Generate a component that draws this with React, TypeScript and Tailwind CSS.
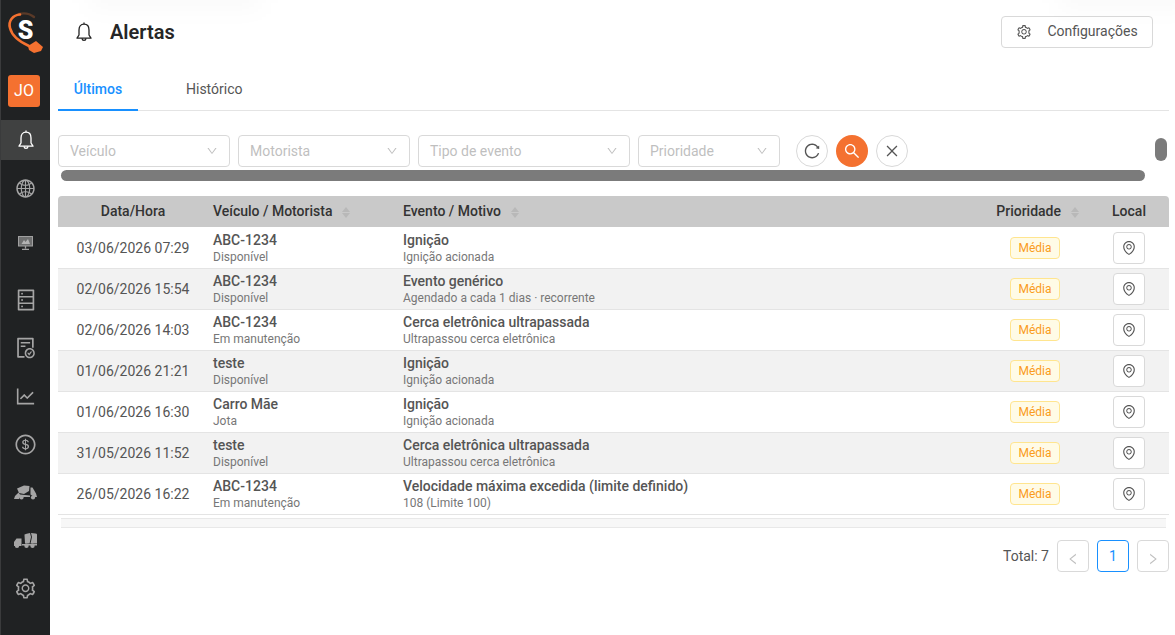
import {
  AiOutlineClose,
  AiOutlineDatabase,
  AiOutlineDollarCircle,
  AiOutlineDown,
  AiOutlineEnvironment,
  AiOutlineFileDone,
  AiOutlineGlobal,
  AiOutlineLeft,
  AiOutlineLineChart,
  AiOutlineReload,
  AiOutlineRight,
  AiOutlineSearch,
  AiOutlineSetting,
} from "react-icons/ai";

const rows = [
  { date: "03/06/2026 07:29", vehicle: "ABC-1234", driver: "Disponível", event: "Ignição", reason: "Ignição acionada" },
  { date: "02/06/2026 15:54", vehicle: "ABC-1234", driver: "Disponível", event: "Evento genérico", reason: "Agendado a cada 1 dias · recorrente" },
  { date: "02/06/2026 14:03", vehicle: "ABC-1234", driver: "Em manutenção", event: "Cerca eletrônica ultrapassada", reason: "Ultrapassou cerca eletrônica" },
  { date: "01/06/2026 21:21", vehicle: "teste", driver: "Disponível", event: "Ignição", reason: "Ignição acionada" },
  { date: "01/06/2026 16:30", vehicle: "Carro Mãe", driver: "Jota", event: "Ignição", reason: "Ignição acionada" },
  { date: "31/05/2026 11:52", vehicle: "teste", driver: "Disponível", event: "Cerca eletrônica ultrapassada", reason: "Ultrapassou cerca eletrônica" },
  { date: "26/05/2026 16:22", vehicle: "ABC-1234", driver: "Em manutenção", event: "Velocidade máxima excedida (limite definido)", reason: "108 (Limite 100)" },
];

const gridCols = "grid grid-cols-[150px_195px_1fr_100px_84px] items-center";

function Logo() {
  return (
    <svg width="49" height="60" viewBox="0 0 49 60" className="block">
      <path d="M33 17 C28 13 22 13 18 14" fill="none" stroke="#5a3a28" strokeWidth="2.4" strokeLinecap="round" />
      <path d="M19 14.5 C12 15 7 21 9 28 C11 36 19 42 28 46" fill="none" stroke="#f47130" strokeWidth="2.6" strokeLinecap="round" />
      <path d="M27 46 L35 41 L42 47 L40 51 L33 53 L28 50 Z" fill="#f47130" />
      <text x="24.5" y="39" textAnchor="middle" fontFamily="Roboto, sans-serif" fontWeight="900" fontSize="25" fill="#ffffff">S</text>
    </svg>
  );
}

function BellIcon({ className }: { className?: string }) {
  return (
    <svg width="16" height="20" viewBox="0 0 16 20" fill="none" stroke="currentColor" strokeWidth="1.3" className={className}>
      <path d="M8 0.5 V2.2 M8 2.2 C4.6 2.2 3 5 3 8 V13 L1 16.2 H15 L13 13 V8 C13 5 11.4 2.2 8 2.2 Z" strokeLinejoin="round" />
      <path d="M6 16.4 C6.2 19 9.8 19 10 16.4" />
    </svg>
  );
}

function MonitorIcon() {
  return (
    <svg width="15" height="14" viewBox="0 0 15 14" fill="none">
      <rect x="0.5" y="0.5" width="14" height="9.5" fill="#6f7070" stroke="#a0a0a0" />
      <path d="M3.5 8 L6 4 L7.5 6 L10 3 L12 8 Z" fill="#d0d0d0" opacity="0.7" />
      <path d="M7.5 10 V12.5 M4 13.3 H11" stroke="#a0a0a0" strokeWidth="1.3" />
    </svg>
  );
}

function MixerTipIcon() {
  return (
    <svg width="23" height="15" viewBox="0 0 23 15" fill="#a5a5a5">
      <path d="M3 3.5 L10 0.5 L15.5 1 L15 6 L10 9 L5 8 Z" />
      <path d="M16.5 2.5 L18.5 2.5 L22 8.5 L23 12 L20 12 L16.5 9.5 Z" />
      <path d="M0 14 L1 11 L4.5 7.5 L6 9.5 L16 10.5 L16 12 L6 12 L5 14 Z" />
      <circle cx="7.5" cy="12.5" r="2.1" />
      <circle cx="19" cy="12.5" r="2.1" />
    </svg>
  );
}

function MixerIcon() {
  return (
    <svg width="23" height="15" viewBox="0 0 23 15" fill="#a5a5a5">
      <path d="M0 13 V9 L2.5 5.5 H7.5 V13 Z" />
      <path d="M10.5 1.5 Q12 0.5 16 0 L17 4 L15.5 10.5 H11 Z" />
      <path d="M17 0 Q23 0 23 1.5 V10.5 H16.5 L18 4 Z" />
      <rect x="8" y="11" width="15" height="1.5" />
      <circle cx="3" cy="12.8" r="2.2" />
      <circle cx="12.5" cy="12.8" r="2.2" />
      <circle cx="18.5" cy="12.8" r="2.2" />
    </svg>
  );
}

function NavItem({ children, active, className }: { children: React.ReactNode; active?: boolean; className?: string }) {
  return (
    <div className={`flex items-center justify-center ${active ? "bg-[#404141] text-white" : "text-[#a5a5a5]"} ${className ?? ""}`}>
      {children}
    </div>
  );
}

function Sidebar() {
  return (
    <aside className="w-[50px] shrink-0 h-[635px] bg-[#202223] border-l border-[#3a3b3c] flex flex-col">
      <div className="h-[60px]">
        <Logo />
      </div>
      <div className="h-[60px] flex justify-center pt-[15px] pr-[3px]">
        <div className="w-8 h-8 rounded-[3px] bg-[#f47130] text-white text-[16px] flex items-center justify-center">JO</div>
      </div>
      <NavItem active className="h-10"><BellIcon /></NavItem>
      <NavItem className="h-[56px] text-[21px]"><AiOutlineGlobal /></NavItem>
      <NavItem className="h-[54px]"><MonitorIcon /></NavItem>
      <NavItem className="h-[48px] mt-[6px] text-[24px]"><AiOutlineDatabase /></NavItem>
      <NavItem className="h-[48px] text-[24px]"><AiOutlineFileDone /></NavItem>
      <NavItem className="h-[48px] text-[23px]"><AiOutlineLineChart /></NavItem>
      <NavItem className="h-[48px] text-[23px]"><AiOutlineDollarCircle /></NavItem>
      <NavItem className="h-[48px]"><MixerTipIcon /></NavItem>
      <NavItem className="h-[48px]"><MixerIcon /></NavItem>
      <NavItem className="h-[48px] text-[23px]"><AiOutlineSetting /></NavItem>
    </aside>
  );
}

function FilterSelect({ label, width }: { label: string; width: string }) {
  return (
    <div className={`${width} h-8 rounded-[4px] border border-[#d9d9d9] bg-white px-[11px] flex items-center justify-between text-[14px] text-[#bfbfbf]`}>
      <span>{label}</span>
      <AiOutlineDown className="text-[12px] text-[#bfbfbf]" />
    </div>
  );
}

function SortCaret() {
  return (
    <span className="flex flex-col gap-[1px] ml-[10px] mt-[1px]">
      <span className="w-0 h-0 border-x-[4px] border-x-transparent border-b-[5px] border-b-[#b8b8b8]" />
      <span className="w-0 h-0 border-x-[4px] border-x-transparent border-t-[5px] border-t-[#b8b8b8]" />
    </span>
  );
}

function CellText({ title, sub, className }: { title: string; sub: string; className?: string }) {
  return (
    <div className={`self-start pt-[4px] ${className ?? ""}`}>
      <div className="text-[14px] leading-[17px] font-medium text-[#555555]">{title}</div>
      <div className="mt-px text-[12px] leading-[15px] text-[#777777]">{sub}</div>
    </div>
  );
}

function AlertRow({ row, striped }: { row: (typeof rows)[number]; striped: boolean }) {
  return (
    <div className={`${gridCols} h-[41px] border-b border-[#e4e4e4] ${striped ? "bg-[#f2f2f2]" : "bg-white"}`}>
      <div className="text-center text-[14px] text-[#555555]">{row.date}</div>
      <CellText title={row.vehicle} sub={row.driver} className="pl-[5px]" />
      <CellText title={row.event} sub={row.reason} />
      <div className="flex justify-center">
        <span className="w-[50px] h-[22px] rounded-[4px] border border-[#ffe58f] bg-[#fffbe6] text-[#fa9c1c] text-[12px] flex items-center justify-center">Média</span>
      </div>
      <div className="flex justify-center pl-[4px]">
        <div className="w-8 h-8 rounded-[4px] border border-[#d9d9d9] bg-white flex items-center justify-center text-[16px] text-[#555555]">
          <AiOutlineEnvironment />
        </div>
      </div>
    </div>
  );
}

export default function App() {
  return (
    <div className="relative w-[1175px] h-[635px] overflow-hidden bg-white flex font-['Roboto',sans-serif]">
      <Sidebar />
      <main className="flex-1 min-w-0 pl-2 pr-[6px]">
        <header className="h-[63px] flex items-center justify-between pr-[16px]">
          <div className="flex items-center">
            <BellIcon className="ml-[18px] text-[#222222]" />
            <h1 className="ml-[18px] text-[20px] font-semibold text-[#262626]">Alertas</h1>
          </div>
          <button className="w-[152px] h-8 rounded-[4px] border border-[#d9d9d9] bg-white flex items-center justify-center gap-[15px] text-[14px] text-[#555555]">
            <AiOutlineSetting className="text-[16px]" />
            <span>Configurações</span>
          </button>
        </header>

        <nav className="h-[48px] border-b border-[#e4e4e4] flex text-[14px]">
          <div className="w-20 h-[48px] pt-[7px] border-b-2 border-[#1890ff] flex items-center justify-center font-medium text-[#1890ff]">Últimos</div>
          <div className="ml-[48px] h-[47px] pt-[5px] flex items-center text-[#555555]">Histórico</div>
        </nav>

        <div className="mt-6 flex items-center gap-2">
          <FilterSelect label="Veículo" width="w-[172px]" />
          <FilterSelect label="Motorista" width="w-[172px]" />
          <FilterSelect label="Tipo de evento" width="w-[212px]" />
          <FilterSelect label="Prioridade" width="w-[142px]" />
          <div className="ml-2 flex gap-2">
            <button className="w-8 h-8 rounded-full border border-[#d9d9d9] bg-white flex items-center justify-center text-[18px] text-[#555555]"><AiOutlineReload /></button>
            <button className="w-8 h-8 rounded-full bg-[#f47130] flex items-center justify-center text-[18px] text-white"><AiOutlineSearch /></button>
            <button className="w-8 h-8 rounded-full border border-[#d9d9d9] bg-white flex items-center justify-center text-[16px] text-[#555555]"><AiOutlineClose /></button>
          </div>
        </div>

        <section className="mt-[29px]">
          <div className={`${gridCols} h-[32px] rounded-t-[4px] border-b border-white bg-[#c9c9c9] text-[14px] font-medium text-[#333333]`}>
            <div className="text-center">Data/Hora</div>
            <div className="pl-[5px] flex items-center">Veículo / Motorista<SortCaret /></div>
            <div className="flex items-center">Evento / Motivo<SortCaret /></div>
            <div className="flex items-center justify-end pr-[6px]">Prioridade<SortCaret /></div>
            <div className="text-center pl-[4px]">Local</div>
          </div>
          {rows.map((row, i) => (
            <AlertRow key={row.date} row={row} striped={i % 2 === 1} />
          ))}
          <div className="mt-[3px] mx-[3px] h-[10px] bg-[#f7f7f7] border-y border-[#e8e8e8]" />
        </section>

        <footer className="mt-3 flex items-center justify-end gap-2 text-[14px] text-[#555555]">
          <span>Total: 7</span>
          <div className="w-8 h-8 rounded-[4px] border border-[#d9d9d9] flex items-center justify-center text-[14px] text-[#bfbfbf]"><AiOutlineLeft className="mt-[6px]" /></div>
          <div className="w-8 h-8 rounded-[4px] border border-[#1890ff] flex items-center justify-center text-[#1890ff]">1</div>
          <div className="w-8 h-8 rounded-[4px] border border-[#d9d9d9] flex items-center justify-center text-[14px] text-[#bfbfbf]"><AiOutlineRight className="mt-[6px]" /></div>
        </footer>
      </main>

      <div className="absolute left-[61px] top-[170px] w-[1084px] h-[11px] rounded-full bg-[#7b7b7b]" />
      <div className="absolute left-[1155px] top-[138px] w-[12px] h-[23px] rounded-full bg-[#7b7b7b]" />
      <div className="absolute left-[90px] -top-[12px] w-[170px] h-[18px] bg-black/3 blur-md" />
      <div className="absolute left-[1060px] -top-[12px] w-[130px] h-[18px] bg-black/3 blur-md" />
    </div>
  );
}
